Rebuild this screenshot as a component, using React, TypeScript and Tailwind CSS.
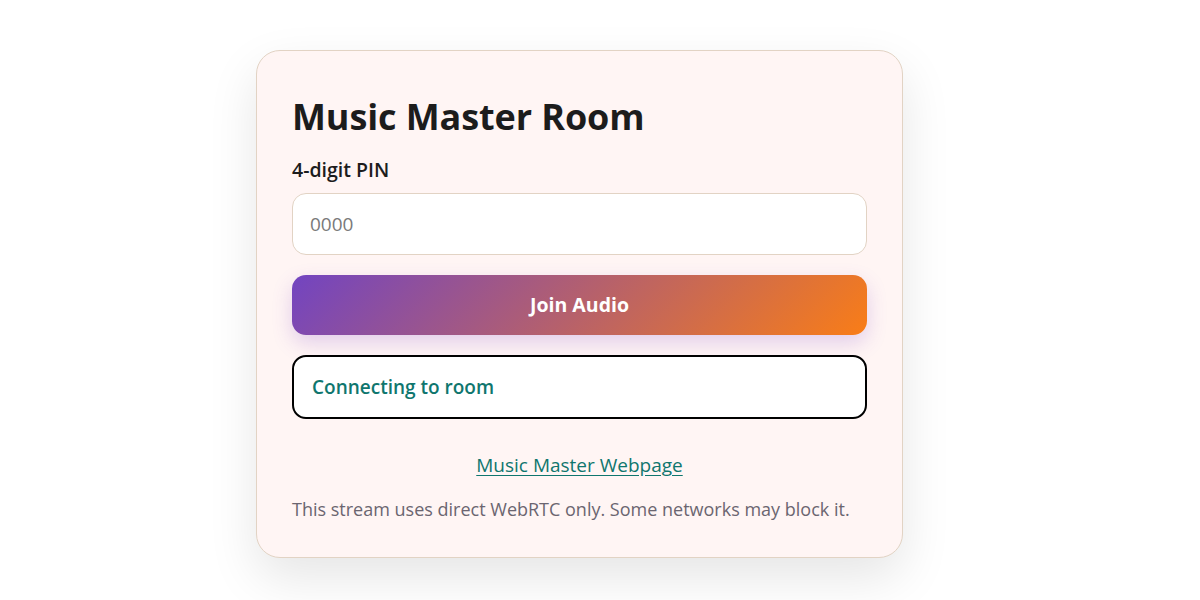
import React from "react";

export default function App() {
  return (
    <div
      className="min-h-[600px] w-[1200px] bg-white pl-[256px] pt-[50px]"
      style={{ fontFamily: '"Open Sans", "Noto Sans", sans-serif' }}
    >
      <div className="w-[647px] rounded-[24px] border border-[#e2d3c4] bg-[#fff5f4] px-[35px] pt-[38px] pb-[35px] shadow-[0_20px_50px_rgba(0,0,0,0.10)]">
        <h1 className="text-[36px] font-bold leading-[56px] text-[#1c1c1c] tracking-[-0.1px]">
          Music Master Room
        </h1>
        <label className="mt-[12px] block text-[19.5px] font-semibold leading-[26px] text-[#1c1c1c]">
          4-digit PIN
        </label>
        <input
          placeholder="0000"
          className="mt-[10px] block h-[62px] w-full rounded-[14px] border border-[#e2d3c4] bg-white px-[17px] text-[19px] text-[#1c1c1c] placeholder:text-[#7a7a7a] outline-none"
        />
        <button className="mt-[20px] block h-[60px] w-full rounded-[14px] bg-[linear-gradient(135deg,#7244c1,#f97d17)] text-[19.5px] font-bold text-white shadow-[0_8px_20px_rgba(124,68,200,0.22)]">
          Join Audio
        </button>
        <div className="mt-[20px] flex h-[64px] items-center rounded-[14px] border-2 border-black bg-white px-[18px] text-[19px] font-semibold text-[#0f766e]">
          Connecting to room
        </div>
        <div className="mt-[32px] text-center">
          <a href="#" className="text-[19px] text-[#0f766e] underline underline-offset-[3px]">
            Music Master Webpage
          </a>
        </div>
        <p className="mt-[16px] text-[18px] leading-[26px] text-[#6b6570]">
          This stream uses direct WebRTC only. Some networks may block it.
        </p>
      </div>
    </div>
  );
}
